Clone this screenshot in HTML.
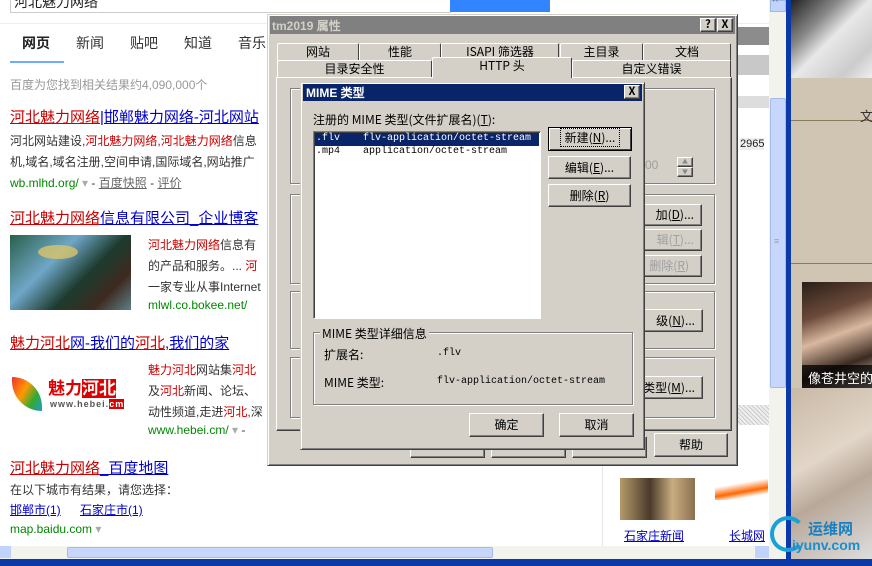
<!DOCTYPE html>
<html><head><meta charset="utf-8">
<style>
*{margin:0;padding:0;box-sizing:border-box}
body{width:872px;height:566px;overflow:hidden;position:relative;background:#fff;font-family:"Liberation Sans","Noto Sans CJK SC","WenQuanYi Zen Hei",sans-serif;font-size:12px;color:#333}
.a{position:absolute}
.t{position:absolute;white-space:nowrap}
.red{color:#c00}
.lk{color:#00c;text-decoration:underline}
.lk .red{text-decoration:underline}
.grn{color:#080}
.gy{color:#666}
.w{font-family:"WenQuanYi Zen Hei","Noto Sans CJK SC",sans-serif;font-size:12px;color:#000}
.mono{font-family:"Liberation Mono",monospace;font-size:10px}
.btn{position:absolute;background:#d4d0c8;border:1px solid;border-color:#fff #404040 #404040 #fff;box-shadow:inset -1px -1px 0 #808080;text-align:center;font-family:"WenQuanYi Zen Hei","Noto Sans CJK SC",sans-serif;font-size:12px;color:#000}
.grp{position:absolute;border:1px solid #808080;box-shadow:1px 1px 0 #fff, inset 1px 1px 0 #fff}
.tab{position:absolute;background:#d4d0c8;border:1px solid;border-color:#fff #404040 transparent #fff;text-align:center;font-family:"WenQuanYi Zen Hei","Noto Sans CJK SC",sans-serif;font-size:12px;color:#000;border-radius:2px 2px 0 0}
</style></head><body>

<div class="a" style="left:10px;top:-2px;width:441px;height:15px;border:1px solid #ccc;border-top:none"></div>
<div class="t" style="left:14px;top:-8px;font-size:14px;color:#222">河北魅力网络</div>
<div class="a" style="left:450px;top:0;width:100px;height:12px;background:#3385ff"></div>
<div class="a" style="left:0;top:23px;width:770px;height:1px;background:#eee"></div>

<div class="t" style="left:22px;top:33px;font-size:14px;font-weight:bold;color:#222">网页</div>
<div class="t" style="left:76px;top:33px;font-size:14px">新闻</div>
<div class="t" style="left:130px;top:33px;font-size:14px">贴吧</div>
<div class="t" style="left:184px;top:33px;font-size:14px">知道</div>
<div class="t" style="left:238px;top:33px;font-size:14px">音乐</div>
<div class="a" style="left:10px;top:61px;width:54px;height:2px;background:#38f;opacity:.7"></div>
<div class="t gy" style="left:10px;top:76px;font-size:12px;color:#999">百度为您找到相关结果约4,090,000个</div>

<div class="t lk" style="left:10px;top:106px;font-size:15px"><span class="red">河北魅力网络</span>|邯郸魅力网络-河北网站</div>
<div class="t" style="left:10px;top:132px;font-size:12px">河北网站建设,<span class="red">河北魅力网络</span>,<span class="red">河北魅力网络</span>信息</div>
<div class="t" style="left:10px;top:153px;font-size:12px">机,域名,域名注册,空间申请,国际域名,网站推广</div>
<div class="t" style="left:10px;top:174px;font-size:12px"><span class="grn">wb.mlhd.org/</span> <span style="color:#aaa">▾</span> - <span class="gy" style="text-decoration:underline">百度快照</span> - <span class="gy" style="text-decoration:underline">评价</span></div>

<div class="t lk" style="left:10px;top:207px;font-size:15px"><span class="red">河北魅力网络</span>信息有限公司_企业博客</div>
<div class="a" style="left:10px;top:235px;width:121px;height:75px;background:linear-gradient(135deg,#2b5f4a 0%,#6fa7c7 35%,#1d3b2e 60%,#3d2a20 80%,#5e7f88 100%)"></div>
<div class="a" style="left:38px;top:245px;width:40px;height:14px;border-radius:50%;background:#d9c46a;opacity:.8"></div>
<div class="t" style="left:148px;top:236px"><span class="red">河北魅力网络</span>信息有</div>
<div class="t" style="left:148px;top:257px">的产品和服务。... <span class="red">河</span></div>
<div class="t" style="left:148px;top:278px">一家专业从事Internet</div>
<div class="t grn" style="left:148px;top:298px">mlwl.co.bokee.net/</div>

<div class="t lk" style="left:10px;top:332px;font-size:15px"><span class="red">魅力河北</span>网-我们的<span class="red">河北</span>,我们的家</div>
<div class="a" style="left:12px;top:377px;width:30px;height:34px;background:linear-gradient(120deg,#e33 0%,#f90 40%,#3a3 70%,#29c 100%);border-radius:0 30px 0 30px"></div>
<div class="t" style="left:48px;top:374px;font-size:17px;font-weight:bold;color:#d00">魅力<span style="background:#d00;color:#fff">河北</span></div>
<div class="t" style="left:50px;top:399px;font-size:9px;font-weight:bold;color:#555;letter-spacing:1px">www.hebei.<span style="background:#d00;color:#fff">cm</span></div>
<div class="t" style="left:148px;top:361px"><span class="red">魅力河北</span>网站集<span class="red">河北</span></div>
<div class="t" style="left:148px;top:382px">及<span class="red">河北</span>新闻、论坛、</div>
<div class="t" style="left:148px;top:403px">动性频道,走进<span class="red">河北</span>,深</div>
<div class="t grn" style="left:148px;top:423px">www.hebei.cm/ <span style="color:#aaa">▾</span> <span style="color:#333">-</span></div>

<div class="t lk" style="left:10px;top:457px;font-size:15px"><span class="red">河北魅力网络</span>_百度地图</div>
<div class="t" style="left:10px;top:481px">在以下城市有结果，请您选择：</div>
<div class="t lk" style="left:10px;top:501px">邯郸市(1)</div>
<div class="t lk" style="left:80px;top:501px">石家庄市(1)</div>
<div class="t grn" style="left:10px;top:522px">map.baidu.com <span style="color:#aaa">▾</span></div>

<div class="a" style="left:602px;top:460px;width:1px;height:86px;background:#e5e5e5"></div>
<div class="a" style="left:620px;top:478px;width:75px;height:42px;background:linear-gradient(90deg,#b59a6a,#4a3a2a 40%,#c9ad80 70%,#8a7050)"></div>
<div class="a" style="left:715px;top:478px;width:53px;height:22px;background:linear-gradient(170deg,#fff 30%,#f60 60%,#fff 80%)"></div>
<div class="t lk" style="left:624px;top:527px">石家庄新闻</div>
<div class="t lk" style="left:729px;top:527px">长城网</div>
<div class="t" style="left:740px;top:138px;font-size:11px;background:#eee;color:#222">2965</div>
<div class="a" style="left:737px;top:27px;width:33px;height:18px;background:#8c8c8c"></div>
<div class="a" style="left:737px;top:55px;width:33px;height:20px;background:#c8c8c8"></div>
<div class="a" style="left:737px;top:96px;width:33px;height:12px;background:#ddd"></div>
<div class="a" style="left:737px;top:405px;width:33px;height:20px;background:repeating-linear-gradient(45deg,#ccc 0 1px,#eee 1px 3px)"></div>

<div class="a" style="left:769px;top:0;width:18px;height:546px;background:#f3f3ee"></div>
<div class="a" style="left:770px;top:0;width:16px;height:12px;background:#c1d3fb;border:1px solid #a0b8e8"></div>
<div class="t" style="left:773px;top:-3px;font-size:10px;color:#4d6185">^</div>
<div class="a" style="left:770px;top:98px;width:16px;height:290px;background:#c6d6fc;border:1px solid #a6bbe8;border-radius:2px"></div>
<div class="t" style="left:774px;top:236px;font-size:9px;color:#8aa">≡</div>
<div class="a" style="left:786px;top:0;width:5px;height:566px;background:#0b3aa8"></div>

<div class="a" style="left:0;top:546px;width:786px;height:13px;background:#f3f3ee"></div>
<div class="a" style="left:0;top:546px;width:11px;height:12px;background:#c1d3fb"></div>
<div class="a" style="left:67px;top:547px;width:426px;height:11px;background:#c6d6fc;border:1px solid #a6bbe8;border-radius:2px"></div>
<div class="a" style="left:755px;top:546px;width:14px;height:12px;background:#c1d3fb"></div>
<div class="a" style="left:0;top:559px;width:872px;height:7px;background:#0b3aa8"></div>

<div class="a" style="left:791px;top:0;width:81px;height:78px;background:linear-gradient(135deg,#222 0%,#888 30%,#e8e8e8 50%,#ccc 80%,#eee)"></div>
<div class="a" style="left:791px;top:78px;width:81px;height:185px;background:#cfc5b2"></div>
<div class="a" style="left:791px;top:120px;width:81px;height:1px;background:#8a7a60"></div>
<div class="t" style="left:860px;top:106px;font-size:13px;color:#333">文</div>
<div class="t" style="left:833px;top:261px;font-size:12px;color:#666">LOFTE</div>
<div class="a" style="left:791px;top:263px;width:81px;height:1px;background:#8a7a60"></div>
<div class="a" style="left:791px;top:264px;width:81px;height:124px;background:#cfc5b2"></div>
<div class="a" style="left:802px;top:282px;width:70px;height:106px;background:linear-gradient(160deg,#2a1e18 0%,#6b4a3a 30%,#d9b8a0 50%,#3a2a20 75%,#e8e0d8)"></div>
<div class="a" style="left:802px;top:365px;width:70px;height:23px;background:rgba(0,0,0,.75)"></div>
<div class="t" style="left:808px;font-size:13px;color:#fff;top:368px">像苍井空的</div>
<div class="a" style="left:791px;top:388px;width:81px;height:171px;background:linear-gradient(150deg,#c9b8a6 0%,#e2d6c8 40%,#b9a899 60%,#ddd 100%)"></div>
<div class="a" style="left:770px;top:516px;width:36px;height:36px;border-radius:50%;border:4px solid #1aa0d8;border-right-color:transparent"></div>
<div class="t" style="left:808px;top:518px;font-size:15px;font-weight:bold;color:#1a7fc0">运维网</div>
<div class="t" style="left:792px;top:537px;font-size:14px;font-weight:bold;color:#1a8fd0">iyunv.com</div>

<div class="a" style="left:267px;top:14px;width:471px;height:452px;background:#d4d0c8;border:1px solid;border-color:#d4d0c8 #404040 #404040 #d4d0c8;box-shadow:inset 1px 1px 0 #fff,inset -1px -1px 0 #808080"></div>
<div class="a" style="left:270px;top:16px;width:465px;height:18px;background:#808080"></div>
<div class="t" style="left:272px;top:17px;font-family:'WenQuanYi Zen Hei',sans-serif;font-size:12px;font-weight:bold;color:#d4d0c8">tm2019 属性</div>
<div class="btn" style="left:700px;top:18px;width:16px;height:14px;font-size:11px;font-weight:bold;line-height:11px">?</div>
<div class="btn" style="left:717px;top:18px;width:16px;height:14px;font-size:11px;font-weight:bold;line-height:11px">X</div>
<div class="tab" style="left:277px;top:43px;width:82px;height:18px;line-height:16px">网站</div>
<div class="tab" style="left:359px;top:43px;width:82px;height:18px;line-height:16px">性能</div>
<div class="tab" style="left:441px;top:43px;width:118px;height:18px;line-height:16px">ISAPI 筛选器</div>
<div class="tab" style="left:560px;top:43px;width:83px;height:18px;line-height:16px">主目录</div>
<div class="tab" style="left:643px;top:43px;width:88px;height:18px;line-height:16px">文档</div>
<div class="tab" style="left:277px;top:60px;width:155px;height:18px;line-height:16px">目录安全性</div>
<div class="tab" style="left:432px;top:57px;width:140px;height:21px;line-height:16px;border-bottom:none;z-index:1">HTTP 头</div>
<div class="tab" style="left:572px;top:60px;width:159px;height:18px;line-height:16px">自定义错误</div>
<div class="a" style="left:276px;top:77px;width:456px;height:354px;border:1px solid;border-color:#fff #404040 #404040 #fff;box-shadow:inset -1px -1px 0 #808080"></div>
<div class="grp" style="left:290px;top:88px;width:425px;height:96px"></div>
<div class="grp" style="left:290px;top:194px;width:425px;height:90px"></div>
<div class="grp" style="left:290px;top:291px;width:425px;height:58px"></div>
<div class="grp" style="left:290px;top:357px;width:425px;height:61px"></div>
<div class="btn" style="left:410px;top:436px;width:75px;height:22px"></div>
<div class="btn" style="left:491px;top:436px;width:75px;height:22px"></div>
<div class="btn" style="left:572px;top:436px;width:75px;height:22px"></div>
<div class="btn" style="left:654px;top:433px;width:74px;height:24px;line-height:22px">帮助</div>
<div class="t" style="left:645px;top:158px;color:#a0a0a0;font-size:12px">00</div>
<div class="btn" style="left:677px;top:157px;width:16px;height:10px;font-size:6px;line-height:8px;color:#888">▲</div>
<div class="btn" style="left:677px;top:167px;width:16px;height:10px;font-size:6px;line-height:8px;color:#888">▼</div>
<div class="btn" style="left:630px;top:204px;width:72px;height:22px;line-height:20px;text-align:right;padding-right:7px">加(<u>D</u>)...</div>
<div class="btn" style="left:630px;top:229px;width:72px;height:22px;line-height:20px;text-align:right;padding-right:7px;color:#a0a0a0">辑(<u>T</u>)...</div>
<div class="btn" style="left:630px;top:255px;width:72px;height:22px;line-height:20px;text-align:right;padding-right:12px;color:#a0a0a0">删除(<u>R</u>)</div>
<div class="btn" style="left:630px;top:309px;width:73px;height:23px;line-height:21px;text-align:right;padding-right:7px">级(<u>N</u>)...</div>
<div class="btn" style="left:630px;top:376px;width:73px;height:23px;line-height:21px;text-align:right;padding-right:7px">类型(<u>M</u>)...</div>

<div class="a" style="left:300px;top:82px;width:345px;height:368px;background:#d4d0c8;border:1px solid;border-color:#d4d0c8 #404040 #404040 #d4d0c8;box-shadow:inset 1px 1px 0 #fff,inset -1px -1px 0 #808080"></div>
<div class="a" style="left:303px;top:84px;width:339px;height:17px;background:#0a246a"></div>
<div class="t" style="left:306px;top:84px;font-family:'WenQuanYi Zen Hei',sans-serif;font-size:12px;font-weight:bold;color:#fff">MIME 类型</div>
<div class="btn" style="left:624px;top:85px;width:16px;height:14px;font-size:11px;font-weight:bold;line-height:11px">X</div>
<div class="t w" style="left:313px;top:111px">注册的 MIME 类型(文件扩展名)(<u>T</u>):</div>
<div class="a" style="left:313px;top:131px;width:228px;height:188px;background:#fff;border:1px solid;border-color:#808080 #fff #fff #808080;box-shadow:inset 1px 1px 0 #404040"></div>
<div class="a" style="left:315px;top:133px;width:224px;height:13px;background:#0a246a"></div>
<div class="t mono" style="left:316px;top:133px;color:#fff">.flv</div>
<div class="t mono" style="left:363px;top:133px;color:#fff">flv-application/octet-stream</div>
<div class="t mono" style="left:316px;top:146px;color:#000">.mp4</div>
<div class="t mono" style="left:363px;top:146px;color:#000">application/octet-stream</div>
<div class="btn" style="left:548px;top:127px;width:84px;height:24px;line-height:20px;border:1px solid #000;box-shadow:inset 1px 1px 0 #fff,inset -1px -1px 0 #404040"><span style="outline:1px dotted #000;padding:0 4px">新建(<u>N</u>)...</span></div>
<div class="btn" style="left:548px;top:156px;width:83px;height:23px;line-height:21px">编辑(<u>E</u>)...</div>
<div class="btn" style="left:548px;top:184px;width:83px;height:23px;line-height:21px">删除(<u>R</u>)</div>
<div class="grp" style="left:313px;top:332px;width:320px;height:73px"></div>
<div class="t w" style="left:320px;top:325px;background:#d4d0c8;padding:0 2px">MIME 类型详细信息</div>
<div class="t w" style="left:324px;top:346px">扩展名:</div>
<div class="t mono" style="left:437px;top:348px;color:#000">.flv</div>
<div class="t w" style="left:324px;top:374px">MIME 类型:</div>
<div class="t mono" style="left:437px;top:376px;color:#000">flv-application/octet-stream</div>
<div class="btn" style="left:469px;top:413px;width:75px;height:24px;line-height:22px">确定</div>
<div class="btn" style="left:559px;top:413px;width:75px;height:24px;line-height:22px">取消</div>

</body></html>
